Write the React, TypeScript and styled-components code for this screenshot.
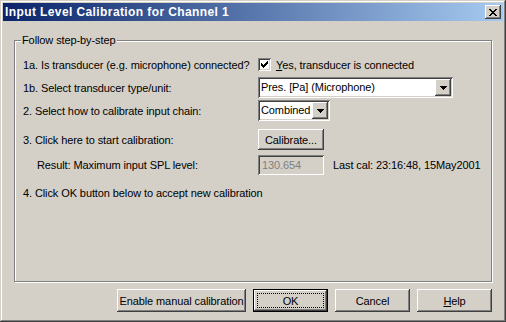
import React from 'react';
import styled, { createGlobalStyle } from 'styled-components';

const GlobalStyle = createGlobalStyle`
  html, body {
    margin: 0;
    padding: 0;
    background: #d4d0c8;
  }
  body {
    font-family: 'Liberation Sans', Arial, sans-serif;
    font-size: 11px;
    letter-spacing: -0.1px;
    color: #000;
  }
`;

const raised = `
  box-shadow: inset -1px -1px 0 #404040, inset 1px 1px 0 #ffffff,
    inset -2px -2px 0 #808080, inset 2px 2px 0 #d4d0c8;
`;

const sunken = `
  box-shadow: inset 1px 1px 0 #808080, inset -1px -1px 0 #ffffff,
    inset 2px 2px 0 #404040, inset -2px -2px 0 #d4d0c8;
`;

const Window = styled.div`
  width: 506px;
  height: 322px;
  box-sizing: border-box;
  padding: 3px;
  display: flex;
  flex-direction: column;
  background: #d4d0c8;
  box-shadow: inset -1px -1px 0 #404040, inset 1px 1px 0 #d4d0c8,
    inset -2px -2px 0 #808080, inset 2px 2px 0 #ffffff;
`;

const TitleBar = styled.div`
  height: 18px;
  display: flex;
  align-items: center;
  justify-content: space-between;
  padding: 0 2px 0 2px;
  background: linear-gradient(to right, #0a246a, #a6caf0);
`;

const Title = styled.span`
  color: #fff;
  font-weight: bold;
  font-size: 12px;
  letter-spacing: 0.4px;
  line-height: 18px;
`;

const CloseButton = styled.div`
  width: 16px;
  height: 14px;
  display: flex;
  align-items: center;
  justify-content: center;
  background: #d4d0c8;
  ${raised}
`;

const Body = styled.div`
  flex: 1;
  display: flex;
  flex-direction: column;
  padding: 0 11px;
`;

const GroupBox = styled.div`
  position: relative;
  margin-top: 19px;
  height: 242px;
  box-sizing: border-box;
  border: 1px solid #808080;
  box-shadow: inset 1px 1px 0 #ffffff, 1px 1px 0 #ffffff;
  padding: 13px 8px 0 8px;
`;

const Caption = styled.span`
  position: absolute;
  top: -7px;
  left: 6px;
  padding: 0 2px 0 1px;
  line-height: 13px;
  background: #d4d0c8;
`;

const Row = styled.div<{ $gap?: number }>`
  display: flex;
  align-items: center;
  height: 21px;
  margin-top: ${(p) => p.$gap ?? 0}px;
`;

const Label = styled.span<{ $indent?: number }>`
  width: 235px;
  flex: none;
  box-sizing: border-box;
  padding-left: ${(p) => p.$indent ?? 0}px;
  white-space: nowrap;
`;

const CheckBox = styled.div`
  width: 13px;
  height: 13px;
  flex: none;
  background: #fff;
  display: flex;
  align-items: center;
  justify-content: center;
  ${sunken}
`;

const CheckLabel = styled.span`
  margin-left: 5px;
  u {
    text-decoration: underline;
  }
`;

const Combo = styled.div<{ $width: number }>`
  width: ${(p) => p.$width}px;
  height: 21px;
  box-sizing: border-box;
  padding: 2px;
  display: flex;
  background: #fff;
  ${sunken}
`;

const ComboText = styled.span`
  flex: 1;
  padding-left: 1px;
  line-height: 17px;
  white-space: nowrap;
  overflow: hidden;
`;

const DropButton = styled.div`
  width: 16px;
  height: 17px;
  flex: none;
  display: flex;
  align-items: center;
  justify-content: center;
  background: #d4d0c8;
  ${raised}
`;

const Button = styled.div<{ $width: number; $height?: number; $default?: boolean }>`
  position: relative;
  width: ${(p) => p.$width}px;
  height: ${(p) => p.$height ?? 23}px;
  box-sizing: border-box;
  flex: none;
  display: flex;
  align-items: center;
  justify-content: center;
  background: #d4d0c8;
  white-space: nowrap;
  ${(p) =>
    p.$default
      ? `
    border: 1px solid #000;
    ${raised}
    &::after {
      content: '';
      position: absolute;
      inset: 3px;
      border: 1px dotted #000;
    }
  `
      : raised}
`;

const ReadOnlyField = styled.div`
  width: 66px;
  height: 20px;
  box-sizing: border-box;
  padding: 0 4px;
  display: flex;
  align-items: center;
  color: #808080;
  ${sunken}
`;

const Note = styled.span`
  margin-left: 9px;
  white-space: nowrap;
`;

const ButtonRow = styled.div`
  display: flex;
  justify-content: flex-end;
  gap: 7px;
  margin-top: 7px;
`;

const CloseGlyph = () => (
  <svg width="8" height="7" viewBox="0 0 8 7" shapeRendering="crispEdges">
    <path
      d="M0 0h2v1h-2zM6 0h2v1h-2zM1 1h2v1h-2zM5 1h2v1h-2zM2 2h4v1h-4zM3 3h2v1h-2zM2 4h4v1h-4zM1 5h2v1h-2zM5 5h2v1h-2zM0 6h2v1h-2zM6 6h2v1h-2z"
      fill="#000"
    />
  </svg>
);

const CheckGlyph = () => (
  <svg width="7" height="7" viewBox="0 0 7 7" shapeRendering="crispEdges">
    <path
      d="M6 0h1v1h-1zM5 1h2v1h-2zM0 2h1v1h-1zM4 2h3v1h-3zM0 3h2v1h-2zM3 3h3v1h-3zM0 4h5v1h-5zM1 5h3v1h-3zM2 6h1v1h-1z"
      fill="#000"
    />
  </svg>
);

const ArrowGlyph = () => (
  <svg width="7" height="4" viewBox="0 0 7 4" shapeRendering="crispEdges">
    <path d="M0 0h7v1h-7zM1 1h5v1h-5zM2 2h3v1h-3zM3 3h1v1h-1z" fill="#000" />
  </svg>
);

export default function App() {
  return (
    <>
      <GlobalStyle />
      <Window>
        <TitleBar>
          <Title>Input Level Calibration for Channel 1</Title>
          <CloseButton>
            <CloseGlyph />
          </CloseButton>
        </TitleBar>
        <Body>
          <GroupBox>
            <Caption>Follow step-by-step</Caption>
            <Row>
              <Label>1a. Is transducer (e.g. microphone) connected?</Label>
              <CheckBox>
                <CheckGlyph />
              </CheckBox>
              <CheckLabel>
                <u>Y</u>es, transducer is connected
              </CheckLabel>
            </Row>
            <Row $gap={2}>
              <Label>1b. Select transducer type/unit:</Label>
              <Combo $width={195}>
                <ComboText>Pres. [Pa] (Microphone)</ComboText>
                <DropButton>
                  <ArrowGlyph />
                </DropButton>
              </Combo>
            </Row>
            <Row $gap={2}>
              <Label>2. Select how to calibrate input chain:</Label>
              <Combo $width={72}>
                <ComboText>Combined</ComboText>
                <DropButton>
                  <ArrowGlyph />
                </DropButton>
              </Combo>
            </Row>
            <Row $gap={8}>
              <Label>3. Click here to start calibration:</Label>
              <Button $width={66} $height={21}>
                Calibrate...
              </Button>
            </Row>
            <Row $gap={4}>
              <Label $indent={14}>Result: Maximum input SPL level:</Label>
              <ReadOnlyField>130.654</ReadOnlyField>
              <Note>Last cal: 23:16:48, 15May2001</Note>
            </Row>
            <Row $gap={7}>
              <Label>4. Click OK button below to accept new calibration</Label>
            </Row>
          </GroupBox>
          <ButtonRow>
            <Button $width={129}>Enable manual calibration</Button>
            <Button $width={75} $default>
              OK
            </Button>
            <Button $width={75}>Cancel</Button>
            <Button $width={75}>
              <u>H</u>elp
            </Button>
          </ButtonRow>
        </Body>
      </Window>
    </>
  );
}
